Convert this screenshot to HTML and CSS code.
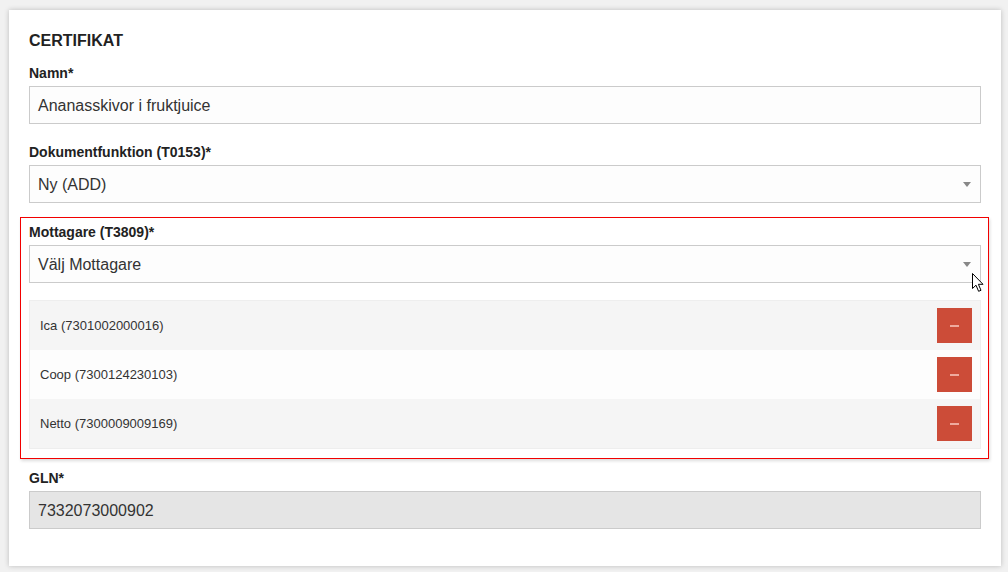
FILE: index.html
```html
<!DOCTYPE html>
<html lang="sv">
<head>
<meta charset="utf-8">
<title>Certifikat</title>
<link rel="stylesheet" href="styles.css">
</head>
<body>
<div class="card">
  <h2 class="title">CERTIFIKAT</h2>

  <div class="group">
    <label class="label">Namn*</label>
    <div class="input">Ananasskivor i fruktjuice</div>
  </div>

  <div class="group group-next">
    <label class="label">Dokumentfunktion (T0153)*</label>
    <div class="input select">Ny (ADD)<span class="caret"></span></div>
  </div>

  <div class="highlight">
    <label class="label">Mottagare (T3809)*</label>
    <div class="input select">Välj Mottagare<span class="caret"></span></div>
    <ul class="list">
      <li class="row"><span>Ica (7301002000016)</span><button class="remove"><span class="minus"></span></button></li>
      <li class="row"><span>Coop (7300124230103)</span><button class="remove"><span class="minus"></span></button></li>
      <li class="row"><span>Netto (7300009009169)</span><button class="remove"><span class="minus"></span></button></li>
    </ul>
  </div>

  <div class="group group-gln">
    <label class="label">GLN*</label>
    <div class="input disabled">7332073000902</div>
  </div>
</div>

<svg class="cursor" width="14" height="21" viewBox="0 0 14 21">
  <path d="M1.5 1.5 L1.5 16.5 L5 13.2 L7.6 19.3 L10 18.3 L7.4 12.3 L12 12.3 Z" fill="#fff" stroke="#000" stroke-width="1" stroke-linejoin="miter"/>
</svg>
</body>
</html>
```

FILE: styles.css
```css
html, body {
  margin: 0;
  padding: 0;
}
body {
  background: #f1f1f1;
  font-family: "Liberation Sans", Arial, sans-serif;
  color: #222;
  position: relative;
  min-height: 572px;
  padding-top: 10px;
  box-sizing: border-box;
}
.card {
  margin: 0 7px 0 9px;
  background: #fff;
  box-shadow: 0 0 5px rgba(0, 0, 0, 0.22);
  padding: 21px 20px 37px 20px;
}
.title {
  margin: 0;
  font-size: 16px;
  line-height: 20px;
  font-weight: bold;
  color: #222;
}
.group {
  margin-top: 14px;
}
.group-next {
  margin-top: 20px;
}
.group-gln {
  margin-top: 11px;
}
.label {
  display: block;
  font-size: 14px;
  line-height: 16px;
  font-weight: bold;
  color: #222;
  margin-bottom: 5px;
}
.input {
  box-sizing: border-box;
  height: 38px;
  border: 1px solid #cbcbcb;
  background: #fdfdfd;
  padding: 1px 8px 0 8px;
  font-size: 16px;
  line-height: 36px;
  color: #333;
  position: relative;
}
.select .caret {
  position: absolute;
  right: 9px;
  top: 16px;
  width: 0;
  height: 0;
  border-left: 4px solid transparent;
  border-right: 4px solid transparent;
  border-top: 5px solid #888;
}
.disabled {
  background: #e5e5e5;
}
.highlight {
  margin: 14px -8px 0 -9px;
  border: 1px solid #f20000;
  padding: 6px 7px 9px 8px;
  box-shadow: 1px 2px 3px rgba(0, 0, 0, 0.14);
  background: #fff;
}
.list {
  list-style: none;
  margin: 17px 0 0 0;
  padding: 0;
  border: 1px solid #eeeeee;
}
.row {
  display: flex;
  align-items: center;
  justify-content: space-between;
  padding: 7px 8px 7px 10px;
  font-size: 13px;
  color: #333;
  background: #f5f5f5;
}
.row:nth-child(2) {
  background: #fdfdfd;
}
.remove {
  width: 35px;
  height: 35px;
  border: 0;
  padding: 0;
  margin: 0;
  background: #cc4c38;
  display: flex;
  align-items: center;
  justify-content: center;
}
.minus {
  display: block;
  width: 9px;
  height: 2px;
  background: #eeaa9e;
}
.cursor {
  position: absolute;
  left: 971px;
  top: 272px;
}
```
